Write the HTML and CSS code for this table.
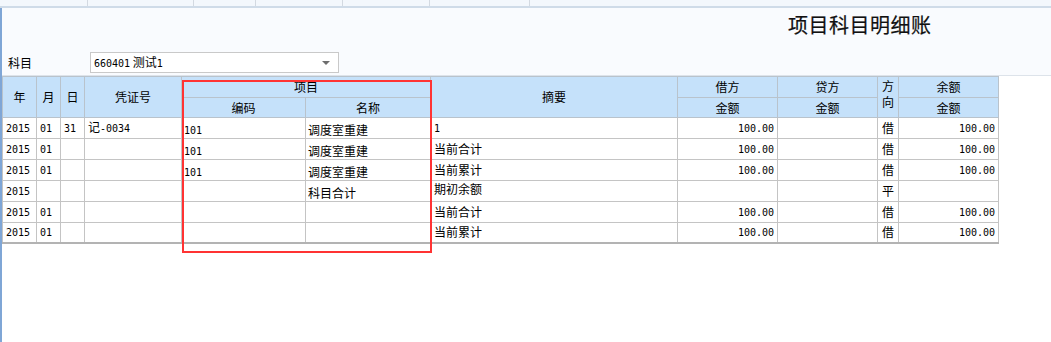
FILE: index.html
```html
<!DOCTYPE html>
<html lang="zh-CN">
<head>
<meta charset="utf-8">
<title>项目科目明细账</title>
<link rel="stylesheet" href="styles.css">
</head>
<body>
<div class="app">
  <div class="toolbar">
    <span class="tb w88"></span>
    <span class="tb w106"></span>
    <span class="tb w62"></span>
    <span class="tb w87"></span>
    <span class="tb w87"></span>
    <span class="tb w100"></span>
    <span class="tb rest"></span>
  </div>
  <div class="main">
    <div class="title-row"><h1 class="title">项目科目明细账</h1></div>
    <div class="subject-row">
      <span class="label">科目</span>
      <div class="select">
        <span class="select-text"><span class="n">660401</span> 测试<span class="n">1</span></span>
        <span class="caret"></span>
      </div>
    </div>
    <div class="grid">
      <table class="ledger">
        <colgroup>
          <col class="c-year"><col class="c-mon"><col class="c-day"><col class="c-vno">
          <col class="c-code"><col class="c-name"><col class="c-memo">
          <col class="c-amt"><col class="c-amt"><col class="c-dir"><col class="c-amt">
        </colgroup>
        <thead>
          <tr class="h1">
            <th rowspan="2">年</th>
            <th rowspan="2">月</th>
            <th rowspan="2">日</th>
            <th rowspan="2">凭证号</th>
            <th colspan="2">项目</th>
            <th rowspan="2">摘要</th>
            <th>借方</th>
            <th>贷方</th>
            <th rowspan="2" class="dir-h">方<br>向</th>
            <th>余额</th>
          </tr>
          <tr class="h2">
            <th>编码</th>
            <th>名称</th>
            <th>金额</th>
            <th>金额</th>
            <th>金额</th>
          </tr>
        </thead>
        <tbody>
          <tr class="r20">
            <td><span class="n">2015</span></td><td><span class="n">01</span></td><td><span class="n">31</span></td><td>记<span class="n">-0034</span></td>
            <td class="item"><span class="n">101</span></td><td class="item">调度室重建</td><td><span class="n">1</span></td>
            <td class="amt"><span class="n">100.00</span></td><td class="amt"></td><td class="dir">借</td><td class="amt"><span class="n">100.00</span></td>
          </tr>
          <tr>
            <td><span class="n">2015</span></td><td><span class="n">01</span></td><td></td><td></td>
            <td class="item"><span class="n">101</span></td><td class="item">调度室重建</td><td>当前合计</td>
            <td class="amt"><span class="n">100.00</span></td><td class="amt"></td><td class="dir">借</td><td class="amt"><span class="n">100.00</span></td>
          </tr>
          <tr>
            <td><span class="n">2015</span></td><td><span class="n">01</span></td><td></td><td></td>
            <td class="item"><span class="n">101</span></td><td class="item">调度室重建</td><td>当前累计</td>
            <td class="amt"><span class="n">100.00</span></td><td class="amt"></td><td class="dir">借</td><td class="amt"><span class="n">100.00</span></td>
          </tr>
          <tr>
            <td><span class="n">2015</span></td><td></td><td></td><td></td>
            <td class="item"></td><td class="item">科目合计</td><td class="top">期初余额</td>
            <td class="amt"></td><td class="amt"></td><td class="dir">平</td><td class="amt"></td>
          </tr>
          <tr>
            <td><span class="n">2015</span></td><td><span class="n">01</span></td><td></td><td></td>
            <td class="item"></td><td class="item"></td><td>当前合计</td>
            <td class="amt"><span class="n">100.00</span></td><td class="amt"></td><td class="dir">借</td><td class="amt"><span class="n">100.00</span></td>
          </tr>
          <tr class="r20">
            <td><span class="n">2015</span></td><td><span class="n">01</span></td><td></td><td></td>
            <td class="item"></td><td class="item"></td><td>当前累计</td>
            <td class="amt"><span class="n">100.00</span></td><td class="amt"></td><td class="dir">借</td><td class="amt"><span class="n">100.00</span></td>
          </tr>
        </tbody>
      </table>
      <div class="mark"></div>
    </div>
  </div>
</div>
</body>
</html>
```

FILE: styles.css
```css
* { box-sizing: border-box; }
html, body { margin: 0; padding: 0; }
body {
  width: 1051px;
  height: 342px;
  overflow: hidden;
  background: #ffffff;
  font-family: "Noto Sans CJK SC", "Noto Sans", sans-serif;
  font-size: 12px;
  color: #000;
}
.app {
  display: flex;
  flex-direction: column;
  height: 342px;
}
.toolbar {
  display: flex;
  height: 8px;
  background: #f3f7fc;
  border-bottom: 2px solid #cfdbe8;
}
.tb { height: 6px; border-right: 1px solid #d3d9e1; }
.w88 { width: 88px; }
.w106 { width: 106px; }
.w62 { width: 62px; }
.w87 { width: 87px; }
.w100 { width: 100px; }
.rest { flex: 1; border-right: none; }

.main {
  flex: 1;
  display: flex;
  flex-direction: column;
  border-left: 2px solid #7fa6d6;
  background: #f9fbfe;
}
.title-row {
  height: 30px;
  padding-top: 5px;
  padding-left: 786px;
}
.title {
  margin: 0;
  font-size: 20px;
  line-height: 24px;
  font-weight: normal;
  color: #111;
  letter-spacing: 0.5px;
  -webkit-text-stroke: 0.2px #111;
}
.subject-row {
  display: flex;
  align-items: center;
  height: 37px;
  padding-top: 14px;
  padding-bottom: 2px;
  padding-left: 6px;
}
.label {
  width: 82px;
  font-size: 12px;
  line-height: 21px;
}
.select {
  width: 249px;
  height: 21px;
  display: flex;
  align-items: center;
  justify-content: space-between;
  background: #fff;
  border: 1px solid #c9c9c9;
  padding: 0 8px 0 3px;
}
.select-text { font-size: 12px; line-height: 19px; }
.caret {
  width: 0;
  height: 0;
  border-left: 4px solid transparent;
  border-right: 4px solid transparent;
  border-top: 4px solid #6e6e6e;
}

.n {
  font-family: "DejaVu Sans Mono", "Liberation Mono", monospace;
  font-size: 10px;
}

.grid {
  position: relative;
  flex: 1;
  background: #ffffff;
  border-top: 1px solid #dde3ea;
}
.ledger {
  table-layout: fixed;
  border-collapse: collapse;
  width: 996px;
  border-bottom: 2px solid #b3b3b3;
}
.c-year { width: 34px; }
.c-mon { width: 24px; }
.c-day { width: 24px; }
.c-vno { width: 97px; }
.c-code { width: 124px; }
.c-name { width: 125px; }
.c-memo { width: 247px; }
.c-amt { width: 100px; }
.c-dir { width: 21px; }

.ledger th {
  background: #c5e1fa;
  border: 1px solid #b9c3cc;
  font-weight: normal;
  font-size: 12px;
  line-height: 14px;
  padding: 0;
  text-align: center;
  vertical-align: middle;
}
.ledger .h1 { height: 21px; }
.ledger .h2 { height: 20px; }
.ledger th.dir-h {
  vertical-align: top;
  line-height: 16px;
  padding-top: 1px;
}
.ledger tbody tr { height: 21px; }
.ledger tbody tr.r20 { height: 20px; }
.ledger td {
  border: 1px solid #c4c4c4;
  padding: 0 2px 0 3px;
  font-size: 12px;
  line-height: 14px;
  white-space: nowrap;
  overflow: hidden;
  vertical-align: middle;
}
.ledger td.item { padding-top: 4px; padding-left: 2px; }
.ledger td.top { vertical-align: top; padding-top: 1px; }
.ledger td.amt { text-align: right; padding-right: 3px; }
.ledger td.dir { text-align: center; padding: 0; }

.mark {
  position: absolute;
  left: 180px;
  top: 4px;
  width: 250px;
  height: 173px;
  border: 2px solid #ff3333;
  pointer-events: none;
}
```
